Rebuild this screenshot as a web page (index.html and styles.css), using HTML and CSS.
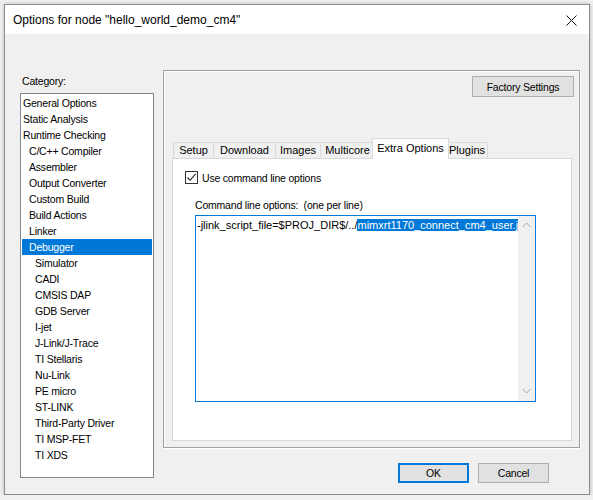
FILE: index.html
```html
<!DOCTYPE html>
<html lang="en">
<head>
    <meta charset="UTF-8">
    <title>Options for node</title>
    <link rel="stylesheet" href="styles.css">
</head>
<body>
    <div class="dialog">
        <div class="titlebar">
            <span class="title">Options for node "hello_world_demo_cm4"</span>
            <span class="close">
                <svg width="11" height="11" viewBox="0 0 11 11">
                    <path d="M0.5 0.5 L10.5 10.5 M10.5 0.5 L0.5 10.5" stroke="#111" stroke-width="1" fill="none"/>
                </svg>
            </span>
        </div>

        <div class="dialog-body">
            <div class="category-col">
                <div class="category-label">Category:</div>
                <ul class="category-list">
                    <li>General Options</li>
                    <li>Static Analysis</li>
                    <li>Runtime Checking</li>
                    <li class="sub">C/C++ Compiler</li>
                    <li class="sub">Assembler</li>
                    <li class="sub">Output Converter</li>
                    <li class="sub">Custom Build</li>
                    <li class="sub">Build Actions</li>
                    <li class="sub">Linker</li>
                    <li class="sub selected">Debugger</li>
                    <li class="sub2">Simulator</li>
                    <li class="sub2">CADI</li>
                    <li class="sub2">CMSIS DAP</li>
                    <li class="sub2">GDB Server</li>
                    <li class="sub2">I-jet</li>
                    <li class="sub2">J-Link/J-Trace</li>
                    <li class="sub2">TI Stellaris</li>
                    <li class="sub2">Nu-Link</li>
                    <li class="sub2">PE micro</li>
                    <li class="sub2">ST-LINK</li>
                    <li class="sub2">Third-Party Driver</li>
                    <li class="sub2">TI MSP-FET</li>
                    <li class="sub2">TI XDS</li>
                </ul>
            </div>

            <div class="options-col">
                <div class="options-panel">
                    <div class="panel-top">
                        <button class="btn factory">Factory Settings</button>
                    </div>

                    <div class="tabs">
                        <div class="tab">Setup</div>
                        <div class="tab">Download</div>
                        <div class="tab">Images</div>
                        <div class="tab">Multicore</div>
                        <div class="tab active">Extra Options</div>
                        <div class="tab">Plugins</div>
                    </div>

                    <div class="tab-page">
                        <label class="check-row">
                            <span class="checkbox">
                                <svg width="11" height="11" viewBox="0 0 11 11">
                                    <path d="M1.5 5.5 L4.2 8.3 L9.6 1.8" stroke="#222" stroke-width="1.1" fill="none"/>
                                </svg>
                            </span>
                            Use command line options
                        </label>

                        <div class="field-label">Command line options:&nbsp; (one per line)</div>

                        <div class="cmd-box">
                            <div class="cmd-text">-jlink_script_file=$PROJ_DIR$/../<span class="sel">mimxrt1170_connect_cm4_user.jlink</span></div>
                            <div class="scrollbar">
                                <svg width="9" height="6" viewBox="0 0 9 6">
                                    <path d="M0.5 5 L4.5 1 L8.5 5" stroke="#a6a6a6" fill="none"/>
                                </svg>
                                <svg width="9" height="6" viewBox="0 0 9 6">
                                    <path d="M0.5 1 L4.5 5 L8.5 1" stroke="#a6a6a6" fill="none"/>
                                </svg>
                            </div>
                        </div>
                    </div>
                </div>

                <div class="dialog-buttons">
                    <button class="btn default">OK</button>
                    <button class="btn">Cancel</button>
                </div>
            </div>
        </div>
    </div>
</body>
</html>
```

FILE: styles.css
```css
* {
    margin: 0;
    padding: 0;
    box-sizing: border-box;
}

body {
    background-color: #f0f0f0;
    padding: 4px 0 0 4px;
    font-family: "Liberation Sans", Arial, sans-serif;
    font-size: 10.5px;
    letter-spacing: -0.2px;
    color: #000;
}

.dialog {
    width: 586px;
    height: 491px;
    border: 1px solid #8c8c8c;
    background-color: #f0f0f0;
    box-shadow: 0 0 4px rgba(0, 0, 0, 0.25);
    display: flex;
    flex-direction: column;
}

.titlebar {
    flex-shrink: 0;
    height: 29px;
    background-color: #fff;
    display: flex;
    align-items: center;
    justify-content: space-between;
    padding: 0 12px 0 8px;
}

.title {
    font-size: 12px;
    letter-spacing: 0;
}

.close {
    display: flex;
    margin-top: 1px;
}

.dialog-body {
    flex: 1;
    min-height: 0;
    display: flex;
    gap: 9px;
    padding: 36px 9px 16px 15px;
}

.category-col {
    flex-shrink: 0;
    width: 134px;
    display: flex;
    flex-direction: column;
}

.category-label {
    margin: 5px 0 0 2px;
    height: 18px;
}

.category-list {
    list-style: none;
    flex: 1;
    background-color: #fff;
    border: 1px solid #828790;
    padding: 1px;
}

.category-list li {
    height: 16px;
    line-height: 16px;
    padding-left: 1px;
    white-space: nowrap;
}

.category-list li.sub {
    padding-left: 7px;
}

.category-list li.sub2 {
    padding-left: 13px;
}

.category-list li.selected {
    background-color: #0078d7;
    color: #fff;
}

.options-col {
    flex: 1;
    min-width: 0;
    display: flex;
    flex-direction: column;
}

.options-panel {
    flex-shrink: 0;
    height: 378px;
    border: 1px solid #a0a0a0;
    box-shadow: inset 1px 1px 0 #fff, 1px 1px 0 #fff;
    padding: 5px 7px 6px 8px;
    display: flex;
    flex-direction: column;
}

.panel-top {
    display: flex;
    justify-content: flex-end;
    height: 62px;
}

.btn {
    font-family: inherit;
    font-size: inherit;
    letter-spacing: inherit;
    color: #000;
    background-color: #e1e1e1;
    border: 1px solid #adadad;
    height: 21px;
}

.factory {
    width: 102px;
    margin-right: -2px;
}

.tabs {
    display: flex;
    align-items: flex-end;
    height: 20px;
    padding-left: 1px;
    position: relative;
    z-index: 1;
}

.tab {
    flex-shrink: 0;
    height: 16px;
    line-height: 15px;
    font-size: 11px;
    letter-spacing: 0;
    text-align: center;
    border: 1px solid #d9d9d9;
    border-bottom: none;
    border-right: none;
    background-color: #f0f0f0;
}

/* tab widths follow the caption lengths of the native control */
.tab:nth-child(1) { width: 40px; }
.tab:nth-child(2) { width: 62px; }
.tab:nth-child(3) { width: 45px; }
.tab:nth-child(4) { width: 54px; }
.tab:nth-child(6) { width: 41px; }

.tab:last-child {
    border-right: 1px solid #d9d9d9;
}

.tab.active {
    width: 77px;
    height: 21px;
    line-height: 18px;
    margin: 0 -2px -1px;
    background-color: #fff;
    border-right: 1px solid #d9d9d9;
    position: relative;
}

.tab.active + .tab {
    border-left: none;
}

.tab-page {
    flex: 1;
    background-color: #fff;
    border: 1px solid #d9d9d9;
    padding: 12px 35px 0 12px;
}

.check-row {
    display: flex;
    align-items: center;
    gap: 4px;
    height: 13px;
}

.checkbox {
    width: 13px;
    height: 13px;
    border: 1px solid #333;
    display: flex;
    align-items: center;
    justify-content: center;
}

.field-label {
    margin: 15px 0 0 10px;
    height: 16px;
}

.cmd-box {
    margin-left: 10px;
    height: 187px;
    border: 1px solid #0078d7;
    display: flex;
}

.cmd-text {
    flex: 1;
    min-width: 0;
    overflow: hidden;
    white-space: nowrap;
    padding: 2px 0 0 1px;
    font-size: 11px;
    letter-spacing: 0;
    line-height: 14px;
}

.cmd-text .sel {
    background-color: #0078d7;
    color: #fff;
}

.scrollbar {
    flex-shrink: 0;
    width: 17px;
    background-color: #f0f0f0;
    display: flex;
    flex-direction: column;
    justify-content: space-between;
    align-items: center;
    padding: 6px 0 7px;
}

.dialog-buttons {
    display: flex;
    justify-content: flex-end;
    gap: 9px;
    margin-top: 15px;
    padding-right: 31px;
}

.dialog-buttons .btn {
    width: 71px;
    height: 20px;
}

.dialog-buttons .btn.default {
    border: 2px solid #0078d7;
}
```
